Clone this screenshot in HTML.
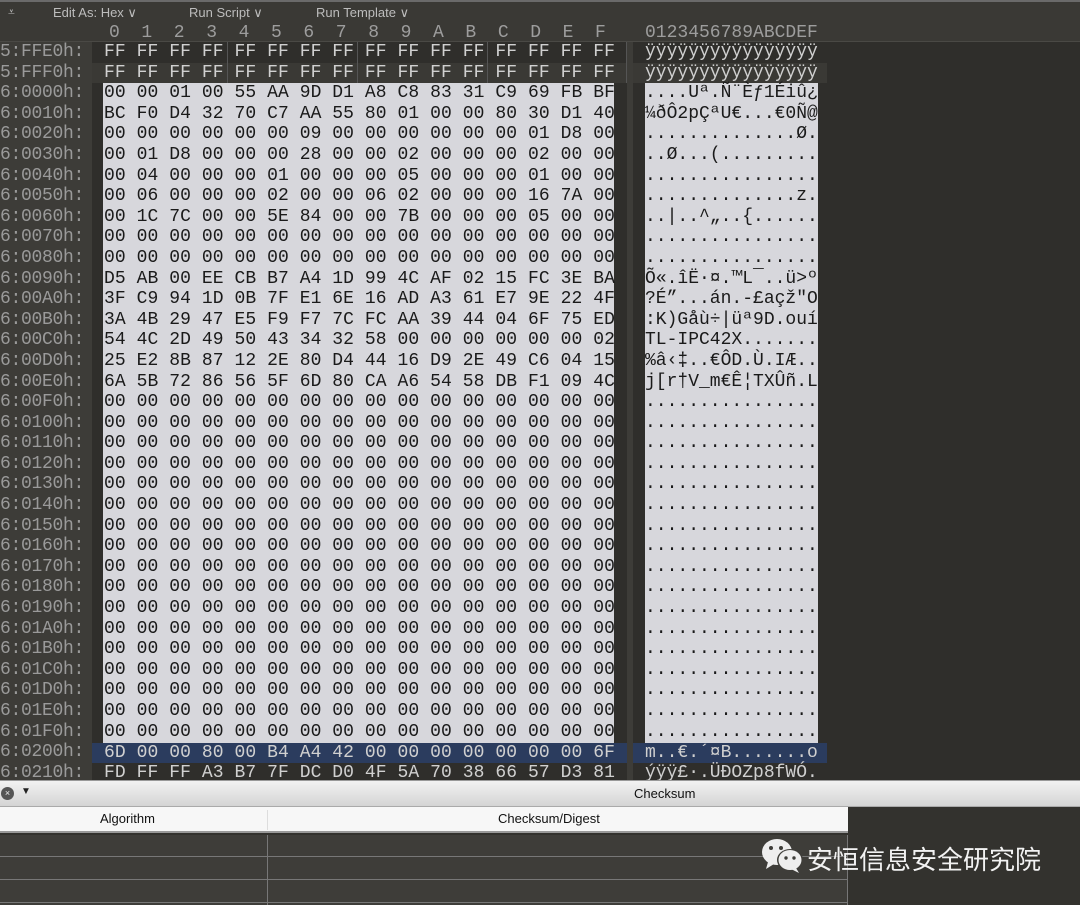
<!DOCTYPE html>
<html><head><meta charset="utf-8"><style>
*{margin:0;padding:0;box-sizing:border-box}
body{width:1080px;height:905px;overflow:hidden;background:#33322e;position:relative;font-family:"Liberation Sans",sans-serif}
.abs{position:absolute}
pre{position:absolute;font-family:"Liberation Mono",monospace;font-size:18px;line-height:20.6px;white-space:pre}
.tb{top:0;left:0;width:1080px;height:23px;background:#3a3935;border-top:2px solid #6a6a6a;color:#bdbdbd;font-size:13px}
.tb span{position:absolute;top:3px}
</style></head><body>
<div class="abs tb">
<span style="left:8px;font-size:12px">&#x2A61;</span>
<span style="left:53px">Edit As: Hex &#x2228;</span>
<span style="left:189px">Run Script &#x2228;</span>
<span style="left:316px">Run Template &#x2228;</span>
</div>
<div class="abs" style="left:0;top:23px;width:1080px;height:19px;background:#3a3935;border-bottom:1px solid #4a4945"></div>
<pre style="left:109px;top:23px;color:#9d9d9d;letter-spacing:21.6px">0123456789ABCDEF</pre>
<pre style="left:645px;top:23px;color:#9d9d9d">0123456789ABCDEF</pre>
<div class="abs" style="left:0;top:42px;width:92px;height:738px;background:#3d3c38"></div>
<div class="abs" style="left:92px;top:42px;width:988px;height:738px;background:#2f2e2b"></div>
<div class="abs" style="left:92px;top:62.6px;width:535px;height:20.6px;background:#3a3935"></div>
<div class="abs" style="left:632px;top:62.6px;width:195px;height:20.6px;background:#3a3935"></div>
<div class="abs" style="left:92px;top:42px;width:535px;height:41px;border-right:1px solid #555"></div>
<div class="abs" style="left:227px;top:42px;width:1px;height:41px;background:#555"></div>
<div class="abs" style="left:357px;top:42px;width:1px;height:41px;background:#555"></div>
<div class="abs" style="left:487px;top:42px;width:1px;height:41px;background:#555"></div>
<div class="abs" style="left:627px;top:42px;width:6px;height:738px;background:#3d3c38"></div>
<div class="abs" style="left:103px;top:83.2px;width:511px;height:659.6px;background:#d7d7dc"></div>
<div class="abs" style="left:645px;top:83.2px;width:173px;height:659.6px;background:#d7d7dc"></div>
<div class="abs" style="left:92px;top:742.8px;width:535px;height:20.6px;background:#2b3c5e"></div>
<div class="abs" style="left:633px;top:742.8px;width:194px;height:20.6px;background:#2b3c5e"></div>
<pre style="left:0;top:42px;color:#9a9a9a;letter-spacing:-0.3px">5:FFE0h:
5:FFF0h:
6:0000h:
6:0010h:
6:0020h:
6:0030h:
6:0040h:
6:0050h:
6:0060h:
6:0070h:
6:0080h:
6:0090h:
6:00A0h:
6:00B0h:
6:00C0h:
6:00D0h:
6:00E0h:
6:00F0h:
6:0100h:
6:0110h:
6:0120h:
6:0130h:
6:0140h:
6:0150h:
6:0160h:
6:0170h:
6:0180h:
6:0190h:
6:01A0h:
6:01B0h:
6:01C0h:
6:01D0h:
6:01E0h:
6:01F0h:
6:0200h:
6:0210h:</pre>
<pre style="left:104px;top:42px;color:#d0d0d0;letter-spacing:0.07px">FF FF FF FF FF FF FF FF FF FF FF FF FF FF FF FF
FF FF FF FF FF FF FF FF FF FF FF FF FF FF FF FF</pre>
<pre style="left:104px;top:83.2px;color:#1a1a1a;letter-spacing:0.07px">00 00 01 00 55 AA 9D D1 A8 C8 83 31 C9 69 FB BF
BC F0 D4 32 70 C7 AA 55 80 01 00 00 80 30 D1 40
00 00 00 00 00 00 09 00 00 00 00 00 00 01 D8 00
00 01 D8 00 00 00 28 00 00 02 00 00 00 02 00 00
00 04 00 00 00 01 00 00 00 05 00 00 00 01 00 00
00 06 00 00 00 02 00 00 06 02 00 00 00 16 7A 00
00 1C 7C 00 00 5E 84 00 00 7B 00 00 00 05 00 00
00 00 00 00 00 00 00 00 00 00 00 00 00 00 00 00
00 00 00 00 00 00 00 00 00 00 00 00 00 00 00 00
D5 AB 00 EE CB B7 A4 1D 99 4C AF 02 15 FC 3E BA
3F C9 94 1D 0B 7F E1 6E 16 AD A3 61 E7 9E 22 4F
3A 4B 29 47 E5 F9 F7 7C FC AA 39 44 04 6F 75 ED
54 4C 2D 49 50 43 34 32 58 00 00 00 00 00 00 02
25 E2 8B 87 12 2E 80 D4 44 16 D9 2E 49 C6 04 15
6A 5B 72 86 56 5F 6D 80 CA A6 54 58 DB F1 09 4C
00 00 00 00 00 00 00 00 00 00 00 00 00 00 00 00
00 00 00 00 00 00 00 00 00 00 00 00 00 00 00 00
00 00 00 00 00 00 00 00 00 00 00 00 00 00 00 00
00 00 00 00 00 00 00 00 00 00 00 00 00 00 00 00
00 00 00 00 00 00 00 00 00 00 00 00 00 00 00 00
00 00 00 00 00 00 00 00 00 00 00 00 00 00 00 00
00 00 00 00 00 00 00 00 00 00 00 00 00 00 00 00
00 00 00 00 00 00 00 00 00 00 00 00 00 00 00 00
00 00 00 00 00 00 00 00 00 00 00 00 00 00 00 00
00 00 00 00 00 00 00 00 00 00 00 00 00 00 00 00
00 00 00 00 00 00 00 00 00 00 00 00 00 00 00 00
00 00 00 00 00 00 00 00 00 00 00 00 00 00 00 00
00 00 00 00 00 00 00 00 00 00 00 00 00 00 00 00
00 00 00 00 00 00 00 00 00 00 00 00 00 00 00 00
00 00 00 00 00 00 00 00 00 00 00 00 00 00 00 00
00 00 00 00 00 00 00 00 00 00 00 00 00 00 00 00
00 00 00 00 00 00 00 00 00 00 00 00 00 00 00 00</pre>
<pre style="left:104px;top:742.8px;color:#d0d0d0;letter-spacing:0.07px">6D 00 00 80 00 B4 A4 42 00 00 00 00 00 00 00 6F
FD FF FF A3 B7 7F DC D0 4F 5A 70 38 66 57 D3 81</pre>
<pre style="left:645px;top:42px;color:#d0d0d0">ÿÿÿÿÿÿÿÿÿÿÿÿÿÿÿÿ
ÿÿÿÿÿÿÿÿÿÿÿÿÿÿÿÿ</pre>
<pre style="left:645px;top:83.2px;color:#1a1a1a">....Uª.Ñ¨Èƒ1Éiû¿
¼ðÔ2pÇªU€...€0Ñ@
..............Ø.
..Ø...(.........
................
..............z.
..|..^„..{......
................
................
Õ«.îË·¤.™L¯..ü>º
?É”...án.-£açž"O
:K)Gåù÷|üª9D.ouí
TL-IPC42X.......
%â‹‡..€ÔD.Ù.IÆ..
j[r†V_m€Ê¦TXÛñ.L
................
................
................
................
................
................
................
................
................
................
................
................
................
................
................
................
................</pre>
<pre style="left:645px;top:742.8px;color:#d0d0d0">m..€.´¤B.......o
ýÿÿ£·.ÜÐOZp8fWÓ.</pre>
<div class="abs" style="left:0;top:780px;width:1080px;height:27px;background:linear-gradient(#f2f2f2,#d4d4d4);border-top:1px solid #999;border-bottom:1px solid #aaa"></div>
<div class="abs" style="left:1px;top:787px;width:13px;height:13px;border-radius:50%;background:#555;color:#eee;font-size:9px;line-height:13px;text-align:center">×</div>
<div class="abs" style="left:21px;top:786px;font-size:10px;color:#222">▼</div>
<div class="abs" style="left:634px;top:786px;font-size:13px;color:#111">Checksum</div>
<div class="abs" style="left:0;top:807px;width:848px;height:26px;background:#f7f7f7;border-bottom:2px solid #999"></div>
<div class="abs" style="left:267px;top:810px;width:1px;height:20px;background:#ddd"></div>
<div class="abs" style="left:100px;top:811px;font-size:13px;color:#111">Algorithm</div>
<div class="abs" style="left:498px;top:811px;font-size:13px;color:#111">Checksum/Digest</div>
<div class="abs" style="left:0;top:835px;width:848px;height:70px;background:#3e3d39;border-right:1px solid #777"></div>
<div class="abs" style="left:0;top:856px;width:848px;height:1px;background:#777"></div>
<div class="abs" style="left:0;top:879px;width:848px;height:1px;background:#777"></div>
<div class="abs" style="left:0;top:902px;width:848px;height:1px;background:#777"></div>
<div class="abs" style="left:267px;top:835px;width:1px;height:70px;background:#777"></div>
<svg class="abs" style="left:760px;top:836px" width="44" height="40" viewBox="0 0 44 40">
<ellipse cx="17" cy="16" rx="15" ry="13" fill="#eee"/>
<path d="M8 26 L6 33 L14 28Z" fill="#eee"/>
<ellipse cx="30" cy="24" rx="13" ry="11" fill="#3e3d39"/>
<ellipse cx="30" cy="24" rx="11.5" ry="10" fill="#eee"/>
<path d="M36 32 L39 37 L31 33Z" fill="#eee"/>
<circle cx="11" cy="12" r="2" fill="#3e3d39"/><circle cx="21" cy="12" r="2" fill="#3e3d39"/>
<circle cx="26" cy="22" r="1.7" fill="#3e3d39"/><circle cx="34" cy="22" r="1.7" fill="#3e3d39"/>
</svg>
<div class="abs" style="left:807px;top:840px;font-size:26px;color:#f2f2f2;font-family:'Liberation Sans','Noto Sans CJK SC',sans-serif">安恒信息安全研究院</div>
</body></html>
